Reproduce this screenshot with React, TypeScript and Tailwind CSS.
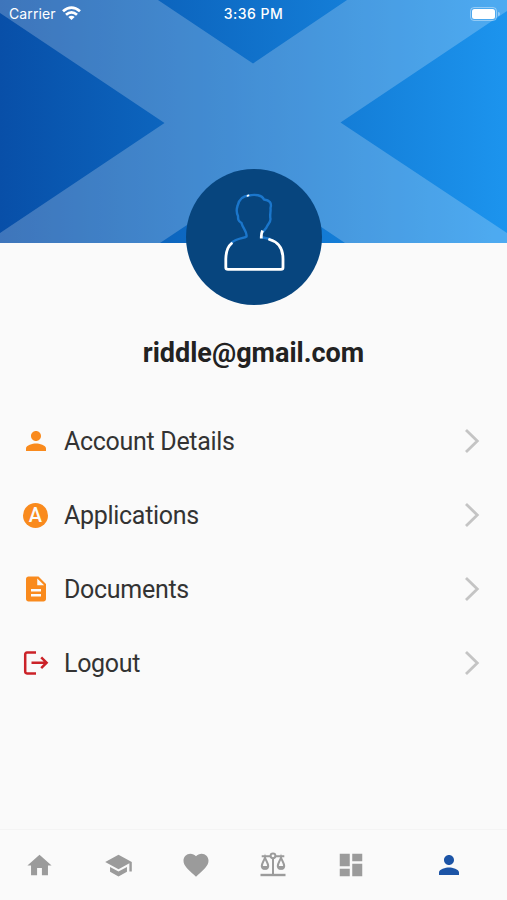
import type { ReactNode } from 'react'
import { MdDashboard, MdDescription, MdFavorite, MdHome, MdPerson, MdSchool } from 'react-icons/md'

type MenuItem = {
	label: string;
	icon: ReactNode;
};

function LogoutIcon(): ReactNode {
	return (
		<svg className="w-[26px] h-6 text-[#cb2228]" viewBox="0 0 26 24" fill="none" stroke="currentColor" strokeWidth="2.5">
			<path d="M13 1.600H4Q2.200 1.600 2.200 3.400V20.600Q2.200 22.400 4 22.400H13" />
			<path d="M8.500 11.700H23.600M18.200 6.300L23.600 11.700L18.200 17.100" />
		</svg>
	)
}

function ScalesIcon(): ReactNode {
	return (
		<svg className="w-[26px] h-[26px]" viewBox="0 0 26 26" fill="none" stroke="currentColor" strokeWidth="2">
			<path d="M1.700 4.200H10.500M15.500 4.200H24.300M13 6.700V23" />
			<circle cx="13" cy="3.800" r="2.400" />
			<path d="M5 5.500C4.200 8.500 1.900 11 1.800 14.100Q2 16.800 5 16.800Q8 16.800 8.200 14.100C8.100 11 5.800 8.500 5 5.500Z" />
			<path d="M2 14H8Q8 17.500 5 17.500Q2 17.500 2 14Z" fill="currentColor" stroke="none" />
			<path d="M21 5.500C20.200 8.500 17.900 11 17.800 14.100Q18 16.800 21 16.800Q24 16.800 24.200 14.100C24.100 11 21.800 8.500 21 5.500Z" />
			<path d="M18 14H24Q24 17.500 21 17.500Q18 17.500 18 14Z" fill="currentColor" stroke="none" />
			<path d="M.5 23H25.500" strokeWidth="2.400" />
		</svg>
	)
}

const menu: MenuItem[] = [
	{ label: 'Account Details', icon: <MdPerson size={30} /> },
	{
		label: 'Applications',
		icon: (
			<span className="flex items-center justify-center w-[25px] h-[25px] rounded-full bg-[#f98a1d] text-[#fafafa] text-[20px] leading-none font-medium">
				A
			</span>
		),
	},
	{ label: 'Documents', icon: <MdDescription size={30} /> },
	{ label: 'Logout', icon: <LogoutIcon /> },
]

function StatusBar(): ReactNode {
	return (
		<div className="relative grid grid-cols-3 items-center h-[27px] pl-[9px] pr-[7px] text-white text-[14px] font-['Inter',sans-serif]">
			<div className="flex items-center gap-[6px]">
				<span className="tracking-[0.1px]">Carrier</span>
				<svg className="w-[19px] h-[14px] -mt-[2px]" viewBox="0 0 19 14" fill="none" stroke="currentColor" strokeWidth="2.8">
					<path d="M1 5.300Q9.500 -2 18 5.300" />
					<path d="M4 8.700Q9.500 4 15 8.700" />
					<path d="M9.500 14L6.300 10.900Q9.500 8.400 12.700 10.900Z" fill="currentColor" stroke="none" />
				</svg>
			</div>
			<span className="-ml-[2px] text-center text-[14px] tracking-[0.45px] font-medium whitespace-nowrap">3:36 PM</span>
			<div className="flex items-center justify-end gap-px">
				<div className="w-[27px] h-[14px] rounded-[4px] border border-white/40 p-px">
					<div className="h-full rounded-[2.5px] bg-white" />
				</div>
				<div className="w-[2px] h-1 rounded-r-full bg-white/40" />
			</div>
		</div>
	)
}

function Header(): ReactNode {
	return (
		<header className="relative h-[243px] bg-linear-to-r from-[#084fa8] to-[#1c94ee]">
			<svg className="absolute inset-0 w-full h-full" viewBox="0 0 507 243">
				<path
					fill="#fff"
					fillOpacity=".22"
					fillRule="evenodd"
					d="M0 0H507V243H0ZM0 13V233L164.500 123ZM158 0L253 63.500L347 0ZM507 11L340.500 122.500L507 233ZM160 243L253 181L345 243Z"
				/>
			</svg>
			<StatusBar />
			<div className="absolute left-[186px] top-[169px] w-[136px] h-[136px] rounded-full bg-[#07457e]">
				<Avatar />
			</div>
		</header>
	)
}

function Avatar(): ReactNode {
	return (
		<svg className="w-full h-full" viewBox="0 0 136 136" fill="none" strokeWidth="2.4" strokeLinecap="round" strokeLinejoin="round">
			<g stroke="#1b76cb">
				<path d="M46 73.500C51 69 58 69.500 60.500 67.500C61.500 63 56.500 59 55.500 54C52 52 52 50 52 47C50.500 44 50.500 40 51.500 37C53 30 57 26.800 63 26.500C69 25 76 26 78 30.500C83.500 31 86 34 84.500 39C85 43 83.500 46 84.500 50C84.500 54 81.500 55 80.500 58.500L77 63" />
				<path d="M77 68.500L84 70" />
			</g>
			<g stroke="#fff" strokeWidth="2.800">
				<path d="M61.500 26.800L62.500 26.400" strokeWidth="1.800" />
				<path d="M76.500 61.500C75 65 75.300 66 75.300 69.500" strokeLinecap="butt" />
				<path d="M83.500 70.500C93 73 97 80 97 90V98.500Q97 100.300 95 100.300H42Q39.800 100.300 39.800 98.500V90C40 83 41 78 45.500 74.500" />
			</g>
		</svg>
	)
}

function MenuRow({ label, icon }: MenuItem): ReactNode {
	return (
		<a href="#" className="flex items-center h-[74px] pl-5 pr-[27px]">
			<span className="flex items-center justify-center w-[31px] text-[#f98a1d]">{icon}</span>
			<span className="flex-1 pl-[13px] pt-[2px] text-[25px] tracking-[-0.3px] text-[#333]">{label}</span>
			<svg className="w-4 h-[26px] text-[#c4c4c4]" viewBox="0 0 16 26" fill="none" stroke="currentColor" strokeWidth="2.8">
				<path d="M2 2L13.300 13L2 24" />
			</svg>
		</a>
	)
}

function TabBar(): ReactNode {
	return (
		<nav className="flex items-center h-[71px] border-t border-[#f4f4f4] text-[#9b9b9b]">
			<a href="#" className="flex justify-center w-[79px]"><MdHome size={29} /></a>
			<a href="#" className="flex justify-center w-[78px]"><MdSchool size={29} /></a>
			<a href="#" className="flex justify-center w-[77px]"><MdFavorite size={30} /></a>
			<a href="#" className="flex justify-center w-[78px]"><ScalesIcon /></a>
			<a href="#" className="flex justify-center w-[78px]"><MdDashboard size={30} /></a>
			<a href="#" className="flex justify-center flex-1 text-[#1c54a6]"><MdPerson size={30} /></a>
		</nav>
	)
}

export default function App(): ReactNode {
	return (
		<div className="flex flex-col w-full h-screen bg-[#fafafa] font-['Roboto',sans-serif]">
			<Header />
			<main className="flex-1">
				<h1 className="pt-[90px] text-center text-[27px] leading-10 font-bold text-[#222]">riddle@gmail.com</h1>
				<div className="pt-[31px]">
					{menu.map((item) => (
						<MenuRow key={item.label} {...item} />
					))}
				</div>
			</main>
			<TabBar />
		</div>
	)
}
